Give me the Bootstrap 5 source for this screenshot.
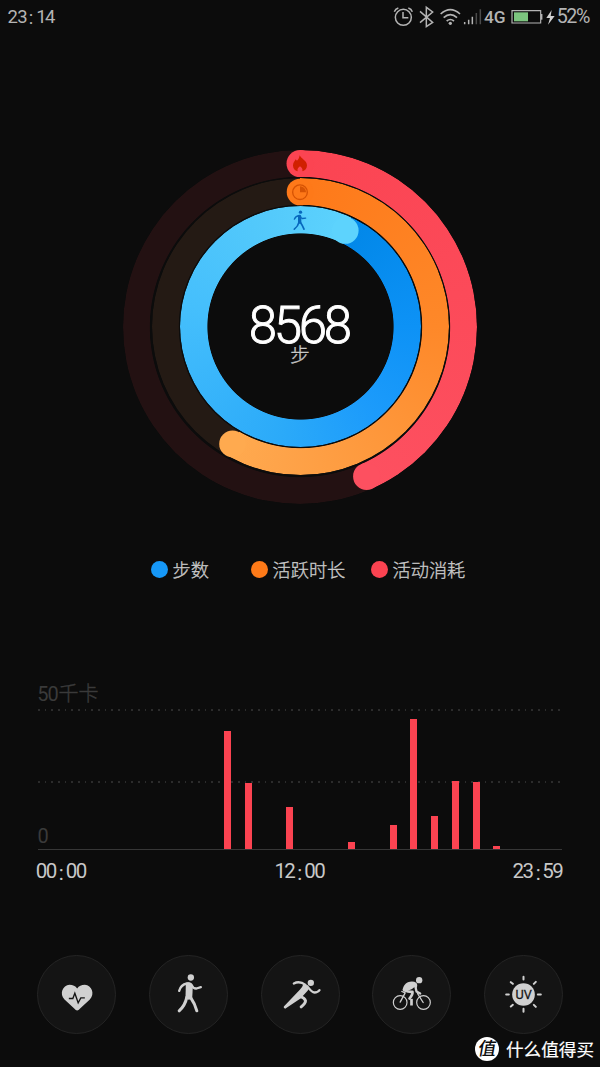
<!DOCTYPE html>
<html lang="zh-CN">
<head>
<meta charset="utf-8">
<meta name="viewport" content="width=device-width, initial-scale=1">
<title>8568 步</title>
<link href="https://cdn.jsdelivr.net/npm/bootstrap@5.3.0/dist/css/bootstrap.min.css" rel="stylesheet">
<style>
  body { background: #0c0c0c; color: #c8c8c8; font-family: Roboto, "Noto Sans CJK SC", sans-serif; }
  .screen { width: 600px; height: 1067px; }
  .zh { font-family: "Noto Sans CJK SC", sans-serif; font-weight: 300; -webkit-text-stroke: .35px currentColor; }
  .statusbar { height: 34px; }
  .digits { font-family: Roboto, sans-serif; }
  svg { display: block; overflow: visible; }
  /* activity rings, all stacked in a single grid cell */
  .rings { width: 354px; height: 354px; margin-top: 115.5px; margin-left: 123px; }
  .rings > * { grid-area: 1 / 1; place-self: center; }
  .ring { border-radius: 50%; }
  .ring-burn { width: 354px; height: 354px;
    background: conic-gradient(#fb4452 0, #fd5060 156deg, #231112 156.2deg);
    mask: radial-gradient(circle, transparent 149.8px, #000 150.6px);
    -webkit-mask: radial-gradient(circle, transparent 149.8px, #000 150.6px); }
  .ring-time { width: 297px; height: 297px;
    background: conic-gradient(#fe7919 0, #fe8829 90deg, #fea44a 190deg, #ffaa4f 210deg, #241a14 210.2deg);
    mask: radial-gradient(circle, transparent 121.3px, #000 122.1px);
    -webkit-mask: radial-gradient(circle, transparent 121.3px, #000 122.1px); }
  .ring-steps { width: 241px; height: 241px;
    background: conic-gradient(from 25deg, #0187e8 0, #0d92f6 65deg, #1c9bfb 115deg, #2baaf9 165deg, #45bffc 255deg, #54cafb 320deg, #5dd3fd 360deg);
    mask: radial-gradient(circle, transparent 92.7px, #000 93.5px);
    -webkit-mask: radial-gradient(circle, transparent 92.7px, #000 93.5px); }
  .legend { height: 30px; margin-top: 50.5px; padding-left: 150.5px; font-size: 18.2px; line-height: 30px; }
  .legend i { width: 17px; height: 17px; border-radius: 50%; margin-right: 5px; }
  .chart { width: 524px; margin: 96.5px 0 0 38px; }
  .ylabel { color: #3a3a3a; }
  .plot { height: 141px; border-bottom: 1px solid #373737; gap: 13.72px; margin-top: 1px; }
  .plot span { width: 7px; flex: none; background: #fb4351; z-index: 1; margin-left: -.5px; margin-right: .5px; }
  .dots { height: 2px; left: 0; right: 0; background: repeating-linear-gradient(90deg, #2c2c2c 0 1.7px, transparent 1.7px 6.667px); }
  .tools { margin: 75.5px 37px 0; }
  .tool { width: 79px; height: 79px; border-radius: 50%; background: #141414; border: 1px solid #242424; padding: 0; }
  .tool svg { width: 79px; height: 79px; margin: -1px; color: #d0d0d0; }
  .brand { position: absolute; right: 0; bottom: 0; width: 130px; height: 36px; }
</style>
</head>
<body>
<main class="screen position-relative overflow-hidden d-flex flex-column">
  <header class="statusbar d-flex justify-content-between flex-shrink-0">
    <svg width="100" height="34" fill="#b4b4b4" class="digits"><text x="7.500 17.200 28.700 36.300 45" y="23" dy="0 0 1.300 -1.300" font-size="18.500">23:14</text></svg>
    <svg width="215" height="34" viewBox="0 0 645 102" fill="none" stroke="#b4b4b4" stroke-width="4.5">
      <circle cx="55" cy="52" r="24"/><path d="M54 36v17h16M28 35q3-8 12-11M82 35q-3-8-12-11"/>
      <path d="M105 34l38 33-19 13V22l19 14-38 32"/>
      <path d="M167 42q29-26 58 0M176 53q20-18 40 0M185 63q11-9 22 0" stroke-width="5"/><circle cx="196" cy="70" r="5" fill="#b4b4b4" stroke="none"/>
      <path d="M239 66v7M251 59v14M262 50v23"/><path d="M274 39v34M286 28v45" stroke="#4b4b4b"/>
      <g fill="#b4b4b4" stroke="none" font-family="Roboto, sans-serif"><text x="297" y="68" font-size="50" font-weight="500" textLength="65" lengthAdjust="spacingAndGlyphs">4G</text><text x="515 544 573" y="70" font-size="59">52%</text></g>
      <path d="M381 32h86v37h-86z" stroke-width="3.5"/><path d="M387 37h42v27h-42z" fill="#7cc47f" stroke="none"/><path d="M470 42v17" />
      <path d="M500 30l-16 24h11l-6 20 20-26h-12z" fill="#d0d0d0" stroke="none"/>
    </svg>
  </header>

  <section class="rings d-grid flex-shrink-0">
    <div class="ring ring-burn"></div>
    <div class="ring ring-time"></div>
    <div class="ring ring-steps"></div>
    <svg class="position-relative z-1" width="354" height="354" viewBox="123 149.500 354 354">
      <circle cx="300" cy="163.100" r="13.500" fill="#fb4452"/><circle cx="366.600" cy="475.900" r="13.500" fill="#fd5060"/>
      <circle cx="300" cy="191.500" r="13.300" fill="#fe7919"/><circle cx="232.500" cy="443.400" r="13.300" fill="#ffaa4f"/>
      <circle cx="345.200" cy="229.900" r="13.400" fill="#5dd3fd"/>
      <!-- flame, clock and walker, drawn on a grid of a third of a pixel -->
      <g transform="translate(260 140) scale(.3333)">
        <path d="M119 44C124 55 141 60 141 75C141 84 135 90 127 92C129 86 125 80 120 77C115 80 111 86 113 92C104 90 99 84 99 75C99 66 104 62 107 56L111 61C116 56 118 50 119 44z" fill="#d02000"/>
        <circle cx="120" cy="155" r="22" fill="none" stroke="#d65304" stroke-width="4"/><path d="M120 137a18 18 0 0 1 18 18h-18z" fill="#d65304"/>
        <g fill="none" stroke="#0767bd" stroke-linecap="round" stroke-linejoin="round"><circle cx="121.500" cy="215" r="5" fill="#0767bd" stroke="none"/><path d="M103 236q4-10 15-11 5 8 9 9l10-1" stroke-width="4"/><path d="M119 228v17" stroke-width="10"/><path d="M117 245q-3 13-14 21M121 245q7 10 11 21" stroke-width="5"/></g>
      </g>
      <text class="digits" x="248.800 273.800 298.800 323.800" y="342.500" font-size="51" font-weight="300" fill="#fff" stroke="#fff" stroke-width=".9">8568</text>
      <text class="zh" x="300" y="361.500" font-size="19.500" text-anchor="middle" fill="#c8c8c8" stroke="#c8c8c8" stroke-width=".35">步</text>
    </svg>
  </section>

  <section class="legend zh d-flex flex-shrink-0">
    <div class="d-flex align-items-center" style="width:100px"><i style="background:#1698f8"></i>步数</div>
    <div class="d-flex align-items-center" style="width:120px"><i style="background:#fe7a18"></i>活跃时长</div>
    <div class="d-flex align-items-center"><i style="background:#fb4351"></i>活动消耗</div>
  </section>

  <section class="chart flex-shrink-0">
    <svg class="ylabel" width="100" height="27" fill="#3a3a3a"><text class="digits" x="-.7 9.500" y="19.500" font-size="20">50</text><text class="zh" x="20.500" y="20" font-size="20" stroke="#3a3a3a" stroke-width=".4">千卡</text></svg>
    <div class="plot d-flex align-items-end position-relative" id="plot">
      <div class="dots position-absolute" style="top:0"></div>
      <div class="dots position-absolute" style="top:72px"></div>
      <svg class="position-absolute start-0 bottom-0" width="20" height="30" fill="#3a3a3a"><text class="digits" x="-.5" y="24" font-size="20">0</text></svg>
    </div>
    <svg class="digits" width="524" height="30" viewBox="38 0 524 30" fill="#c8c8c8" font-size="20.500"><text x="35.800 45.800 58.700 65.800 75.800" y="28" dy="0 0 1.500 -1.500">00:00</text><text x="274.500 284.300 297.300 304.200 314.200" y="28" dy="0 0 1.500 -1.500">12:00</text><text x="512.500 522.400 535.700 542.300 552.300" y="28" dy="0 0 1.500 -1.500">23:59</text></svg>
  </section>

  <nav class="tools d-flex justify-content-between flex-shrink-0">
    <button class="tool btn"><svg viewBox="21.500 29.500 237 237"><path d="M142 196c-3 0-5-2-8-5l-30-28c-16-16-6-43 15-44 10 0 18 4 23 11 5-7 13-11 23-11 21 1 31 28 15 44l-30 28c-3 3-5 5-8 5z" fill="currentColor"/><path d="M117 160h12l6-16 10 29 8-15h12" fill="none" stroke="#141414" stroke-width="4"/></svg></button>
    <button class="tool btn"><svg viewBox="356.500 29.500 237 237" fill="none" stroke="currentColor" stroke-linecap="round" stroke-linejoin="round"><circle cx="482" cy="97" r="9.500" fill="currentColor" stroke="none"/><path d="M447 137q5-18 23-22 8 0 13 3 6 13 16 12l13-4" stroke-width="7"/><path d="M467 114q6-5 15-1 6 5 6 12l-2 35q-10 7-20 0z" fill="currentColor" stroke="none"/><path d="M470 156q-5 25-23 41M482 158q12 17 18 39" stroke-width="9"/></svg></button>
    <button class="tool btn"><svg viewBox="31.500 29.500 237 237" fill="none" stroke="currentColor" stroke-linecap="round" stroke-linejoin="round"><circle cx="181" cy="113" r="9.500" fill="currentColor" stroke="none"/><path d="M130 115q17-9 35 4" stroke-width="7"/><path d="M170 123q14 19 22 19 10 0 15-7" stroke-width="7"/><path d="M158 118q9-3 15 7 4 7-3 13l-20 22-46 31q-6-3-4-7l48-50q8-8 10-16z" fill="currentColor" stroke="none"/><path d="M148 154q15 4 17 13 0 8-13 18" stroke-width="9"/></svg></button>
    <button class="tool btn"><svg viewBox="366.500 29.500 237 237" fill="none" stroke="currentColor" stroke-linecap="round" stroke-linejoin="round"><circle cx="451" cy="172" r="20.500" stroke-width="3.500"/><circle cx="521" cy="172" r="20.500" stroke-width="3.500"/><circle cx="508" cy="105" r="9.500" fill="currentColor" stroke="none"/><path d="M458 134q3-17 16-23 16-5 25 2 6 6 1 16l-4-5q-10 10-20 12h-13q-5 1-5-2z" fill="currentColor" stroke="none"/><path d="M496 122l4 17 11 6" stroke-width="7"/><path d="M463 135q14 6 25 5 1 8-9 20" stroke-width="8"/><path d="M456 139l10 4-15 28M503 145l17 27" stroke-width="4"/><path d="M485 161v20" stroke-width="8" stroke-linecap="butt"/></svg></button>
    <button class="tool btn"><svg viewBox="71.500 29.500 237 237" fill="none" stroke="currentColor" stroke-width="6" stroke-linecap="round"><circle cx="190" cy="148" r="34" fill="currentColor" stroke="none"/><path d="M190 95v8M190 191v9M138 148h8M233 148h9M152 111l6 5M227 110l-6 6M152 184l6-5M227 185l-6-6"/><text x="166" y="163" fill="#141414" stroke="#141414" stroke-width=".8" font-family="Roboto, sans-serif" font-size="40" textLength="49" lengthAdjust="spacingAndGlyphs">UV</text></svg></button>
  </nav>

  <svg class="brand" viewBox="0 0 130 36" fill="#fff"><circle cx="17" cy="18" r="12"/><text x="17" y="24.500" text-anchor="middle" fill="#0c0c0c" font-size="18" font-weight="500" font-family="Noto Sans CJK SC, sans-serif" transform="translate(3.500 0) skewX(-10)">值</text><text x="36" y="24.500" font-size="17.600" font-weight="400" stroke="#fff" stroke-width=".2" font-family="Noto Sans CJK SC, sans-serif">什么值得买</text></svg>
</main>
<script src="https://cdn.jsdelivr.net/npm/bootstrap@5.3.0/dist/js/bootstrap.bundle.min.js"></script>
<script>
  // energy burned per hour, as bar heights
  const hours = new Array(24).fill(0);
  Object.assign(hours, { 9: 117.5, 10: 66, 12: 42, 15: 7, 17: 24, 18: 130, 19: 33, 20: 68, 21: 67, 22: 2.5 });
  const plot = document.getElementById('plot');
  for (const h of hours) {
    const bar = document.createElement('span');
    bar.style.height = h + 'px';
    plot.append(bar);
  }
</script>
</body>
</html>
